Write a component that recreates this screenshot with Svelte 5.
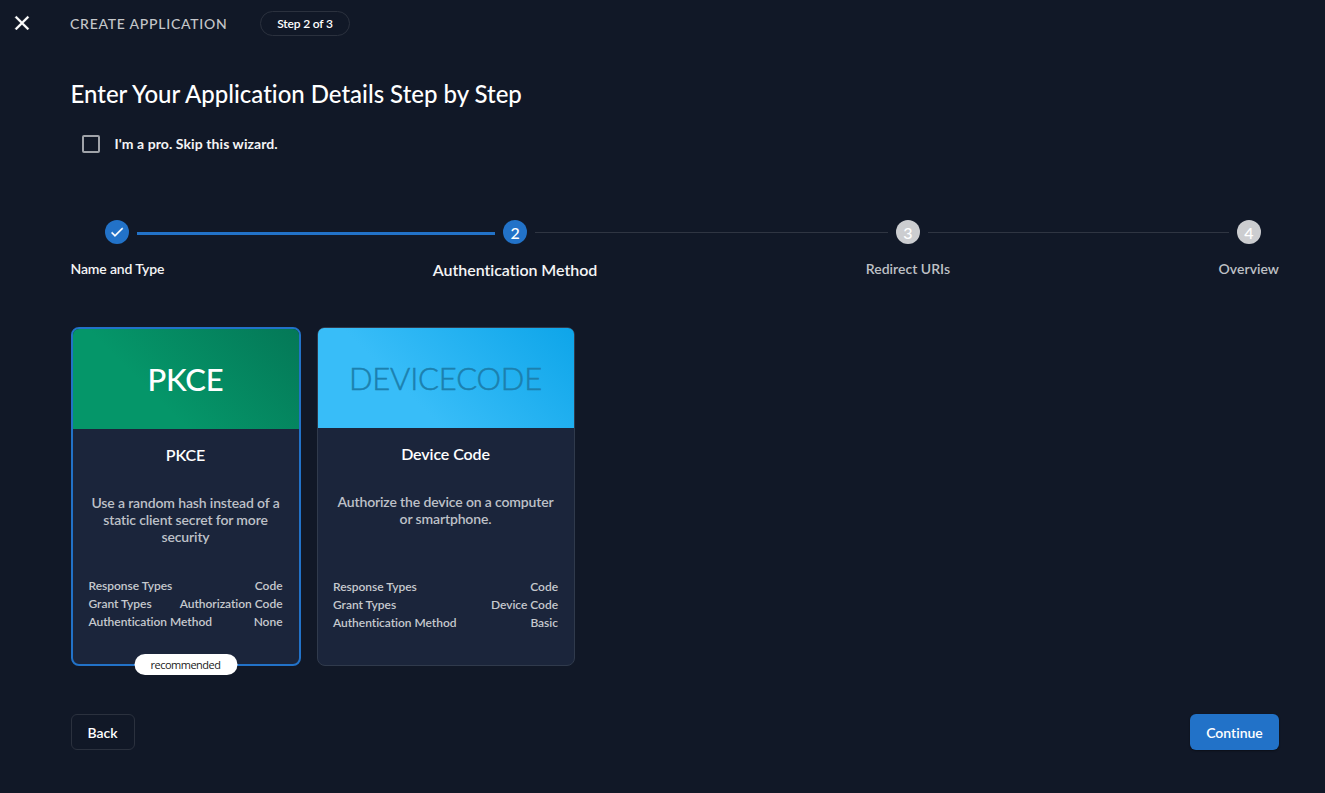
<script>
  const steps = [
    { label: 'Name and Type', state: 'done' },
    { label: 'Authentication Method', state: 'active' },
    { label: 'Redirect URIs', state: 'todo' },
    { label: 'Overview', state: 'todo' },
  ];

  const methods = [
    {
      key: 'PKCE',
      tone: 'green',
      title: 'PKCE',
      text: 'Use a random hash instead of a static client secret for more security',
      rows: [
        ['Response Types', 'Code'],
        ['Grant Types', 'Authorization Code'],
        ['Authentication Method', 'None'],
      ],
      recommended: true,
      selected: true,
    },
    {
      key: 'DEVICECODE',
      tone: 'blue',
      title: 'Device Code',
      text: 'Authorize the device on a computer or smartphone.',
      rows: [
        ['Response Types', 'Code'],
        ['Grant Types', 'Device Code'],
        ['Authentication Method', 'Basic'],
      ],
      recommended: false,
      selected: false,
    },
  ];
</script>

<header>
  <button class="close" aria-label="Close">
    <svg width="24" height="24" viewBox="0 0 24 24"><path fill="currentColor" stroke="currentColor" stroke-width="0.3" d="M19 6.41L17.59 5 12 10.59 6.41 5 5 6.41 10.59 12 5 17.59 6.41 19 12 13.41 17.59 19 19 17.59 13.41 12z" /></svg>
  </button>
  <span class="crumb">CREATE APPLICATION</span>
  <span class="count">Step 2 of 3</span>
</header>

<main>
  <h1>Enter Your Application Details Step by Step</h1>
  <label class="skip"><span class="box"></span><span class="skip-text">I'm a pro. Skip this wizard.</span></label>

  <div class="stepper">
    {#each steps as step, i}
      {#if i > 0}
        <span class="gap" class:thick={i === 1}></span>
      {/if}
      <div class="step {step.state}">
        <div class="rail">
          <span class="half" class:hidden={i === 0} class:thick={i === 1}></span>
          <span class="dot">
            {#if step.state === 'done'}
              <svg width="16" height="16" viewBox="0 0 24 24"><path fill="#fff" stroke="#fff" stroke-width="0.6" d="M9 16.17L4.83 12l-1.42 1.41L9 19 21 7l-1.41-1.41z" /></svg>
            {:else}
              <span class="num">{i + 1}</span>
            {/if}
          </span>
          <span class="half" class:hidden={i === steps.length - 1} class:thick={i === 0}></span>
        </div>
        <div class="label">{step.label}</div>
      </div>
    {/each}
  </div>

  <div class="cards">
    {#each methods as m}
      <article class="card" class:selected={m.selected}>
        <div class="banner {m.tone}">{m.key}</div>
        <div class="body">
          <h2>{m.title}</h2>
          <p>{m.text}</p>
          <dl>
            {#each m.rows as [name, value]}
              <div><dt>{name}</dt><dd>{value}</dd></div>
            {/each}
          </dl>
        </div>
        {#if m.recommended}
          <span class="badge">recommended</span>
        {/if}
      </article>
    {/each}
  </div>

  <footer>
    <button class="btn back">Back</button>
    <button class="btn next">Continue</button>
  </footer>
</main>

<style>
  :global(body) {
    margin: 0;
    background: #111827;
    color: #fff;
    font-family: Lato, 'Liberation Sans', sans-serif;
    font-weight: 600;
    font-variant-ligatures: none;
  }
  :global(#app) { min-height: 793px; background: #111827; }
  * { box-sizing: border-box; }
  button { font: inherit; color: inherit; background: none; border: 0; padding: 0; font-variant-ligatures: none; }

  header { display: flex; align-items: center; height: 47px; }
  .close { width: 24px; height: 24px; margin: 0 36px 1px 10px; }
  .close svg { display: block; }
  .crumb { width: 190px; font-size: 14px; letter-spacing: 0.75px; color: #c4c6c9; font-weight: 500; line-height: 17px; }
  .count {
    width: 90px; height: 25px; border: 1px solid #2b313e; border-radius: 13px;
    font-size: 12px; line-height: 23px; text-align: center; letter-spacing: -0.15px;
  }

  main { padding: 0 46px 0 70.5px; }
  h1 { margin: 32px 0 0; font-size: 24px; line-height: 29px; font-weight: 500; letter-spacing: -0.01px; }
  .skip { display: flex; align-items: center; margin: 25px 0 0 11.5px; height: 22px; font-size: 14px; }
  .skip-text { padding-bottom: 2px; letter-spacing: 0.08px; font-weight: 700; color: #f4f4f5; }
  .box { width: 18px; height: 18px; border: 2px solid #a0a3a9; border-radius: 2px; margin-right: 14.5px; }

  .stepper { display: flex; margin-top: 65px; height: 62px; }
  .step { display: flex; flex-direction: column; }
  .rail { display: flex; height: 24px; gap: 8px; }
  .half { flex: 1; height: 1px; margin-top: 12px; background: #2f3542; }
  .gap { flex: 1; height: 1px; margin-top: 12px; background: #2f3542; }
  .thick { height: 3px; background: #2272c8; }
  .hidden { visibility: hidden; }
  .dot {
    display: flex; align-items: center; justify-content: center;
    width: 24px; height: 24px; border-radius: 50%; background: #cccdd0;
    font-size: 16px; line-height: 24px; font-weight: 500;
  }
  .num { padding-top: 2px; }
  .done .dot, .active .dot { background: #2272c8; }
  .label { margin-top: 16px; font-size: 14px; line-height: 18px; color: #bec0c5; white-space: nowrap; letter-spacing: 0.02px; }
  .done .label { color: #f4f4f5; letter-spacing: -0.15px; }
  .active .label { color: #f4f4f5; font-size: 16px; line-height: 20px; letter-spacing: -0.05px; }

  .cards { display: flex; gap: 16px; margin-top: 45px; height: 339px; }
  .card {
    position: relative; width: 258px; border: 1px solid #303a4c; border-radius: 8px;
    background: #1b253b;
  }
  .card.selected { width: 230px; border: 2px solid #2272c8; }
  .banner {
    display: flex; align-items: center; justify-content: center; height: 100px;
    font-size: 31px; padding-bottom: 1px; border-radius: 6px 6px 0 0;
  }
  .green { background: linear-gradient(45deg, #059669 35%, #047857); font-weight: 500; letter-spacing: -0.2px; }
  .blue {
    background: linear-gradient(45deg, #38bdf8 35%, #0ea5e9); color: #1c80ae;
    font-weight: 300; letter-spacing: -0.2px; -webkit-text-stroke: 0.5px #1c80ae;
  }
  .body { padding: 16px 16px 0; }
  h2 { margin: 0; font-size: 16px; line-height: 20px; font-weight: 600; text-align: center; letter-spacing: -0.1px; }
  p { margin: 29px -3px 0; height: 51px; font-size: 14px; line-height: 17px; color: #bec1c8; text-align: center; letter-spacing: -0.14px; }
  dl { margin: 32px 0 0; font-size: 12px; line-height: 18px; color: #c6c9ce; letter-spacing: -0.03px; }
  .card:not(.selected) p { margin-left: 0; margin-right: 0; }
  .card:not(.selected) dl { margin-top: 34px; }
  .card:not(.selected) .body { padding: 16px 15.5px 0; }
  dl div { display: flex; justify-content: space-between; }
  dd { margin: 0; }
  .badge {
    position: absolute; left: 50%; bottom: -10.5px; transform: translateX(-50%);
    width: 103px; height: 21px; border-radius: 11px; background: #fff; color: #222;
    font: 11px/22px 'Open Sans', sans-serif; text-align: center; letter-spacing: -0.5px;
  }

  footer { display: flex; justify-content: space-between; margin-top: 48px; }
  .btn { height: 36px; border-radius: 6px; font-size: 14px; letter-spacing: 0; }
  .back { width: 64px; border: 1px solid #2b313e; }
  .next { width: 89px; background: #2272c8; box-shadow: 0 1px 2px #0006; }
</style>
